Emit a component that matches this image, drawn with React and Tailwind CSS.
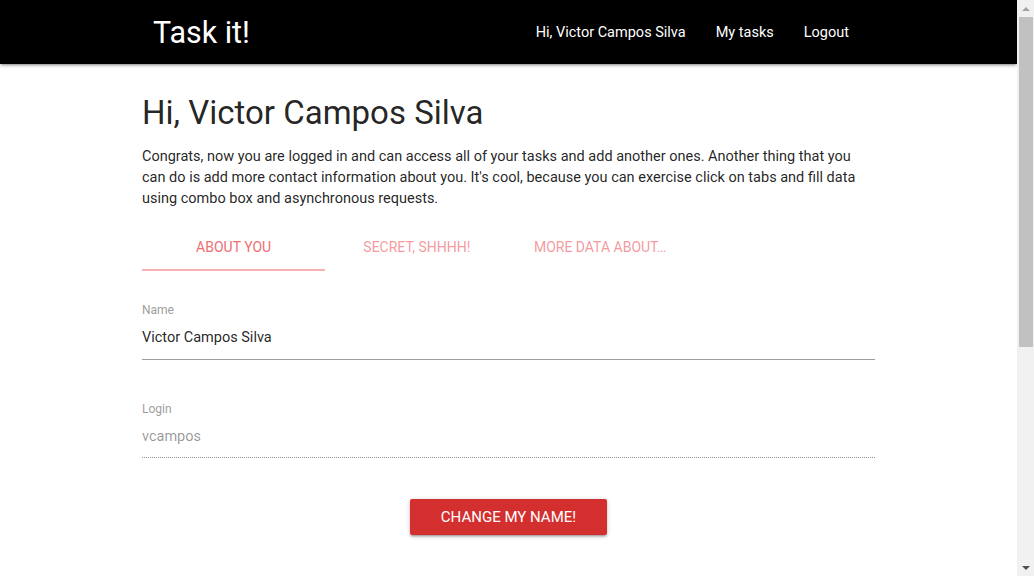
import React, { useState } from "react";

const tabs = ["About you", "Secret, shhhh!", "More data about…", ""];

const shadow =
  "shadow-[0_2px_2px_0_rgba(0,0,0,0.14),0_3px_1px_-2px_rgba(0,0,0,0.12),0_1px_5px_0_rgba(0,0,0,0.2)]";

const Scrollbar = () => (
  <div className="flex h-full w-[17px] flex-col items-center bg-[#f1f1f1]">
    <div className="flex h-[17px] items-center justify-center">
      <span className="h-0 w-0 border-x-[4px] border-b-[4px] border-x-transparent border-b-[#a3a3a3]" />
    </div>
    <div className="h-[330px] w-[14px] bg-[#c1c1c1]" />
    <div className="flex-1" />
    <div className="flex h-[17px] items-center justify-center">
      <span className="h-0 w-0 border-x-[4px] border-t-[4px] border-x-transparent border-t-[#505050]" />
    </div>
  </div>
);

const App = () => {
  const [active, setActive] = useState(0);

  return (
    <div className="flex h-screen overflow-hidden bg-white font-['Roboto',sans-serif] text-[rgba(0,0,0,0.87)]">
      <div className="flex-1 overflow-hidden">
        {/* navbar */}
        <nav className={`relative z-10 h-16 bg-black ${shadow}`}>
          <div className="mx-auto flex h-full w-[733px] items-center justify-between pt-[2px]">
            <a className="pl-[11px] text-[30.45px] leading-none text-white">Task it!</a>
            <ul className="flex h-full items-center text-[14.5px] text-white">
              <li className="px-[15px]">Hi, Victor Campos Silva</li>
              <li className="px-[15px]">My tasks</li>
              <li className="pl-[15px] pr-[26px]">Logout</li>
            </ul>
          </div>
        </nav>

        <main className="mx-auto w-[733px] pt-[29px]">
          <h4 className="text-[33px] font-normal leading-[40px]">Hi, Victor Campos Silva</h4>
          <p className="mt-[13px] text-[14.5px] leading-[21px]">
            Congrats, now you are logged in and can access all of your tasks and add another ones. Another thing that you
            can do is add more contact information about you. It's cool, because you can exercise click on tabs and fill data
            using combo box and asynchronous requests.
          </p>

          {/* tabs */}
          <ul className="mt-[14px] grid h-12 grid-cols-4">
            {tabs.map((t, i) => (
              <li
                key={i}
                onClick={() => t && setActive(i)}
                className={`relative flex cursor-pointer items-center justify-center px-6 text-[14px] uppercase ${
                  i === active ? "text-[#ee6e73]" : "text-[rgba(238,110,115,0.7)]"
                }`}
              >
                <span className="whitespace-nowrap">{t}</span>
                {i === active && <span className="absolute bottom-0 left-0 h-[2px] w-full bg-[#f6b2b5]" />}
              </li>
            ))}
          </ul>

          {/* form */}
          <div className="mt-[31px]">
            <label className="block h-4 text-[12px] leading-4 text-[#9e9e9e]">Name</label>
            <input
              defaultValue="Victor Campos Silva"
              className="-mt-[4px] h-[46px] w-full border-b border-[#9e9e9e] pt-[2px] text-[14.5px] outline-none"
            />
          </div>
          <div className="mt-[41px]">
            <label className="block h-4 text-[12px] leading-4 text-[#9e9e9e]">Login</label>
            <input
              disabled
              defaultValue="vcampos"
              className="-mt-[4px] h-[45px] w-full border-b border-dotted border-[rgba(0,0,0,0.42)] bg-transparent pt-[3px] text-[14.5px] text-[rgba(0,0,0,0.42)] outline-none"
            />
          </div>

          <div className="mt-[41px] flex justify-center">
            <button className={`h-9 w-[197px] rounded-[2px] bg-[#d32f2f] text-[15px] uppercase text-white ${shadow}`}>
              Change my name!
            </button>
          </div>
        </main>
      </div>
      <Scrollbar />
    </div>
  );
};

export default App;
